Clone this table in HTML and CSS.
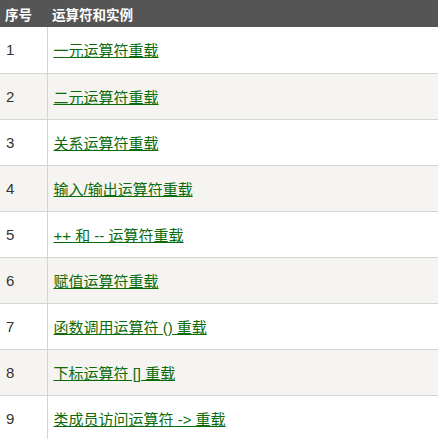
FILE: index.html
```html
<!DOCTYPE html>
<html lang="zh">
<head>
<meta charset="utf-8">
<link rel="stylesheet" href="styles.css">
</head>
<body>
<table class="reference">
  <thead>
    <tr><th class="col-num">序号</th><th>运算符和实例</th></tr>
  </thead>
  <tbody>
    <tr><td class="col-num">1</td><td><a href="#">一元运算符重载</a></td></tr>
    <tr><td class="col-num">2</td><td><a href="#">二元运算符重载</a></td></tr>
    <tr><td class="col-num">3</td><td><a href="#">关系运算符重载</a></td></tr>
    <tr><td class="col-num">4</td><td><a href="#">输入/输出运算符重载</a></td></tr>
    <tr><td class="col-num">5</td><td><a href="#">++ 和 -- 运算符重载</a></td></tr>
    <tr><td class="col-num">6</td><td><a href="#">赋值运算符重载</a></td></tr>
    <tr><td class="col-num">7</td><td><a href="#">函数调用运算符 () 重载</a></td></tr>
    <tr><td class="col-num">8</td><td><a href="#">下标运算符 [] 重载</a></td></tr>
    <tr><td class="col-num">9</td><td><a href="#">类成员访问运算符 -&gt; 重载</a></td></tr>
  </tbody>
</table>
</body>
</html>
```
FILE: styles.css
```css
html, body {
  margin: 0;
  padding: 0;
  background: #fff;
}
body {
  font-family: "Liberation Sans", "Noto Sans CJK SC", sans-serif;
  color: #333;
}
.reference {
  width: 438px;
  border-collapse: collapse;
  table-layout: fixed;
}
.reference th {
  background: #555;
  color: #fff;
  font-size: 13.5px;
  font-weight: bold;
  text-align: left;
  height: 27px;
  padding: 0 5px;
  box-sizing: border-box;
  border: 0;
  vertical-align: middle;
}
.reference th.col-num, .reference td.col-num {
  width: 47px;
}
.reference td {
  height: 46px;
  box-sizing: border-box;
  padding: 0 5px 0 6px;
  border: 1px solid #d4d4d4;
  border-top: 0;
  font-size: 15px;
  vertical-align: middle;
}
.reference td:first-child {
  border-left: 0;
}
.reference td:last-child {
  border-right: 0;
}
.reference tbody tr:nth-child(even) td {
  background: #f6f4f0;
}
.reference a {
  color: #0b6b0b;
  text-decoration: underline;
}
```
